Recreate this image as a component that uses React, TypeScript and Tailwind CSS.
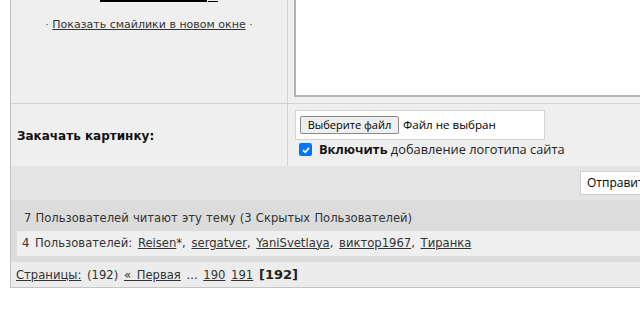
import React from 'react';

const users = ['Reisen', 'sergatver', 'YaniSvetlaya', 'виктор1967', 'Тиранка'];

const App = () => {
  return (
    <div className="w-[640px] h-[323px] overflow-hidden bg-white font-['DejaVu_Sans',sans-serif] text-[#222]">
      <div className="ml-[10px] w-[660px] border-l border-b border-[#c4c4c4]">
        {/* smilies + textarea */}
        <div className="flex h-[104px] border-b border-[#d2d2d2]">
          <div className="w-[277px] shrink-0 bg-[#efefef] border-r border-[#d2d2d2] flex flex-col items-center">
            <div className="flex items-start gap-[1px] ml-[20px]">
              <div className="h-[2px] w-[107px] bg-black" />
              <div className="h-[2px] w-[10px] border-b border-black" />
            </div>
            <div className="mt-[15px] text-[11px] text-[#555]">
              · <a href="#" className="underline text-[#333]">Показать смайлики в новом окне</a> ·
            </div>
          </div>
          <div className="flex-1 bg-[#efefef] pl-[6px]">
            <div className="h-[97px] bg-white border-l-2 border-b-2 border-[#b4b4b4]" />
          </div>
        </div>

        {/* upload */}
        <div className="flex h-[62px]">
          <div className="w-[277px] shrink-0 bg-[#efefef] border-r border-[#d2d2d2] flex items-center pl-[6px] pt-[1px]">
            <span className="text-[12px] font-bold text-[#111]">Закачать картинку:</span>
          </div>
          <div className="flex-1 bg-[#efefef] pl-[7px] pt-[6px]">
            <div className="w-[250px] h-[30px] bg-white border border-[#d4d4d4] flex items-center pl-[4px] gap-[4px] font-['Open_Sans',sans-serif]">
              <div className="h-[18px] w-[99px] flex items-center justify-center bg-[#efefef] border border-[#8a8a8a] rounded-[2px] text-[11px] text-black">Выберите файл</div>
              <span className="text-[11.6px] text-black">Файл не выбран</span>
            </div>
            <div className="flex items-center h-[15px] mt-[2px] ml-[4px] gap-[7px] text-[12.8px] font-['Open_Sans',sans-serif]">
              <div className="w-[13px] h-[13px] rounded-[2px] bg-[#0075ff] flex items-center justify-center">
                <svg width="10" height="10" viewBox="0 0 10 10"><path d="M2 5.2 L4.2 7.3 L8 2.8" stroke="white" strokeWidth="1.8" fill="none" /></svg>
              </div>
              <span className="text-[#222]"><b className="text-[#111]">Включить</b> добавление логотипа сайта</span>
            </div>
          </div>
        </div>

        {/* submit */}
        <div className="h-[34px] bg-[#e4e4e4] flex items-center pl-[569px]">
          <div className="h-[24px] px-[6px] bg-white border border-[#cfcfcf] flex items-center text-[12px] text-black font-['Open_Sans',sans-serif] whitespace-nowrap">Отправить</div>
        </div>

        {/* readers */}
        <div className="bg-[#dcdcdc] px-[6px] pb-[6px] text-[11.6px] text-[#333]">
          <div className="h-[31px] pt-[10px] pl-[7px] [word-spacing:0.5px]">7 Пользователей читают эту тему (3 Скрытых Пользователей)</div>
          <div className="h-[25px] bg-[#efefef] flex items-center pl-[5px]">
            <span className="[word-spacing:2px]">
              4 Пользователей:{' '}
              {users.map((u, i) => (
                <React.Fragment key={u}>
                  <a href="#" className="underline text-[#333]">{u}</a>
                  {i === 0 ? '*' : ''}
                  {i < users.length - 1 ? ', ' : ''}
                </React.Fragment>
              ))}
            </span>
          </div>
        </div>

        {/* pages */}
        <div className="h-[25px] bg-[#ececec] flex items-center pl-[5px] text-[11.6px] text-[#333]">
          <span className="[word-spacing:2px]">
            <a href="#" className="underline">Страницы:</a> (192) <a href="#" className="underline">« Первая</a> ... <a href="#" className="underline">190</a> <a href="#" className="underline">191</a> <b className="text-[13px] text-[#222]">[192]</b>
          </span>
        </div>
      </div>
    </div>
  );
};

export default App;
